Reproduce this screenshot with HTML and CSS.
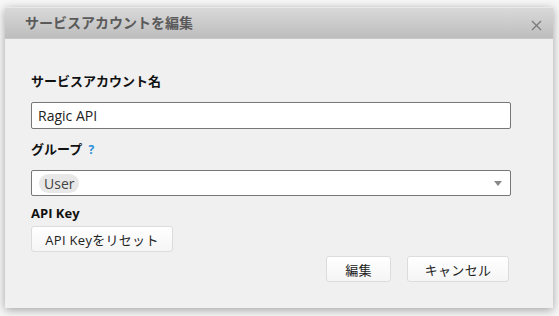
FILE: index.html
```html
<!DOCTYPE html>
<html lang="ja">
<head>
  <meta charset="UTF-8">
  <title>サービスアカウントを編集</title>
  <link rel="stylesheet" href="styles.css">
</head>
<body>
  <div class="dialog">
    <div class="dialog-title">
      <span>サービスアカウントを編集</span>
      <svg class="close" width="11" height="11" viewBox="0 0 11 11"><path d="M1 1L10 10M10 1L1 10" stroke="#7a7a7a" stroke-width="1.3" fill="none"/></svg>
    </div>
    <div class="dialog-body">
      <div class="label">サービスアカウント名</div>
      <input class="field" type="text" value="Ragic API">
      <div class="label group">グループ <span class="help">?</span></div>
      <div class="field select">
        <span class="tag">User</span>
        <span class="arrow"></span>
      </div>
      <div class="label key">API Key</div>
      <button class="btn reset">API Keyをリセット</button>
      <div class="footer">
        <button class="btn edit">編集</button>
        <button class="btn cancel">キャンセル</button>
      </div>
    </div>
  </div>
</body>
</html>
```

FILE: styles.css
```css
* { box-sizing: border-box; }
html, body {
  margin: 0; padding: 0;
  width: 559px; height: 316px;
  overflow: hidden;
  background: #f7f7f7;
  font-family: "Open Sans", "Noto Sans CJK JP", sans-serif;
  color: #222;
}
body { padding: 7px 0 0 5px; }
.dialog {
  width: 548px; height: 301px;
  background: #f0f0f0;
  border-top: 1px solid #e8e8e8;
  box-shadow: 0 2px 9px rgba(0,0,0,0.35);
  display: flex; flex-direction: column;
}
.dialog-title {
  height: 31px;
  display: flex; align-items: center; justify-content: space-between;
  padding: 0 11px 0 20px;
  background: linear-gradient(#d9d9d9, #bdbdbd);
  border-bottom: 1px solid #c8c8c8;
  font-size: 14px; font-weight: bold; color: #5a5a5a;
}
.dialog-title span { margin-top: -3px; }
.close { margin-top: 4px; }
.dialog-body {
  padding: 33px 42px 0 26px;
  display: flex; flex-direction: column;
}
.label {
  font-size: 13px; font-weight: bold; line-height: 18px; color: #111;
}
.help { color: #2a8fd6; font-size: 12px; margin-left: 3px; }
.field {
  width: 480px;
  border: 1px solid #777;
  border-radius: 2px;
  background: #fff;
  font-family: inherit;
}
input.field {
  margin-top: 12px; height: 27px;
  padding: 0 6px;
  font-size: 14px; color: #222;
  outline: none;
}
.group { margin-top: 11px; }
.select {
  margin-top: 11px; height: 26px;
  display: flex; align-items: center; justify-content: space-between;
  padding: 0 6px 0 7px;
}
.tag {
  background: #e8e8e8; color: #444;
  border-radius: 10px;
  font-size: 14px; line-height: 19px;
  padding: 0 5px;
}
.arrow {
  width: 0; height: 0;
  border-left: 4px solid transparent;
  border-right: 4px solid transparent;
  border-top: 5px solid #888;
  margin-right: 2px;
}
.key { margin-top: 8px; }
.btn {
  font-family: inherit;
  font-size: 13px; color: #222;
  background: linear-gradient(#ffffff, #f5f5f5);
  border: 1px solid #dcdcdc;
  border-radius: 3px;
  height: 26px;
  padding: 0;
  letter-spacing: 0.3px;
}
.reset { margin-top: 4px; width: 142px; align-self: flex-start; }
.footer {
  margin-top: 4px;
  display: flex; justify-content: flex-end; gap: 16px;
  padding-right: 2px;
}
.edit { width: 65px; }
.cancel { width: 102px; }
```
